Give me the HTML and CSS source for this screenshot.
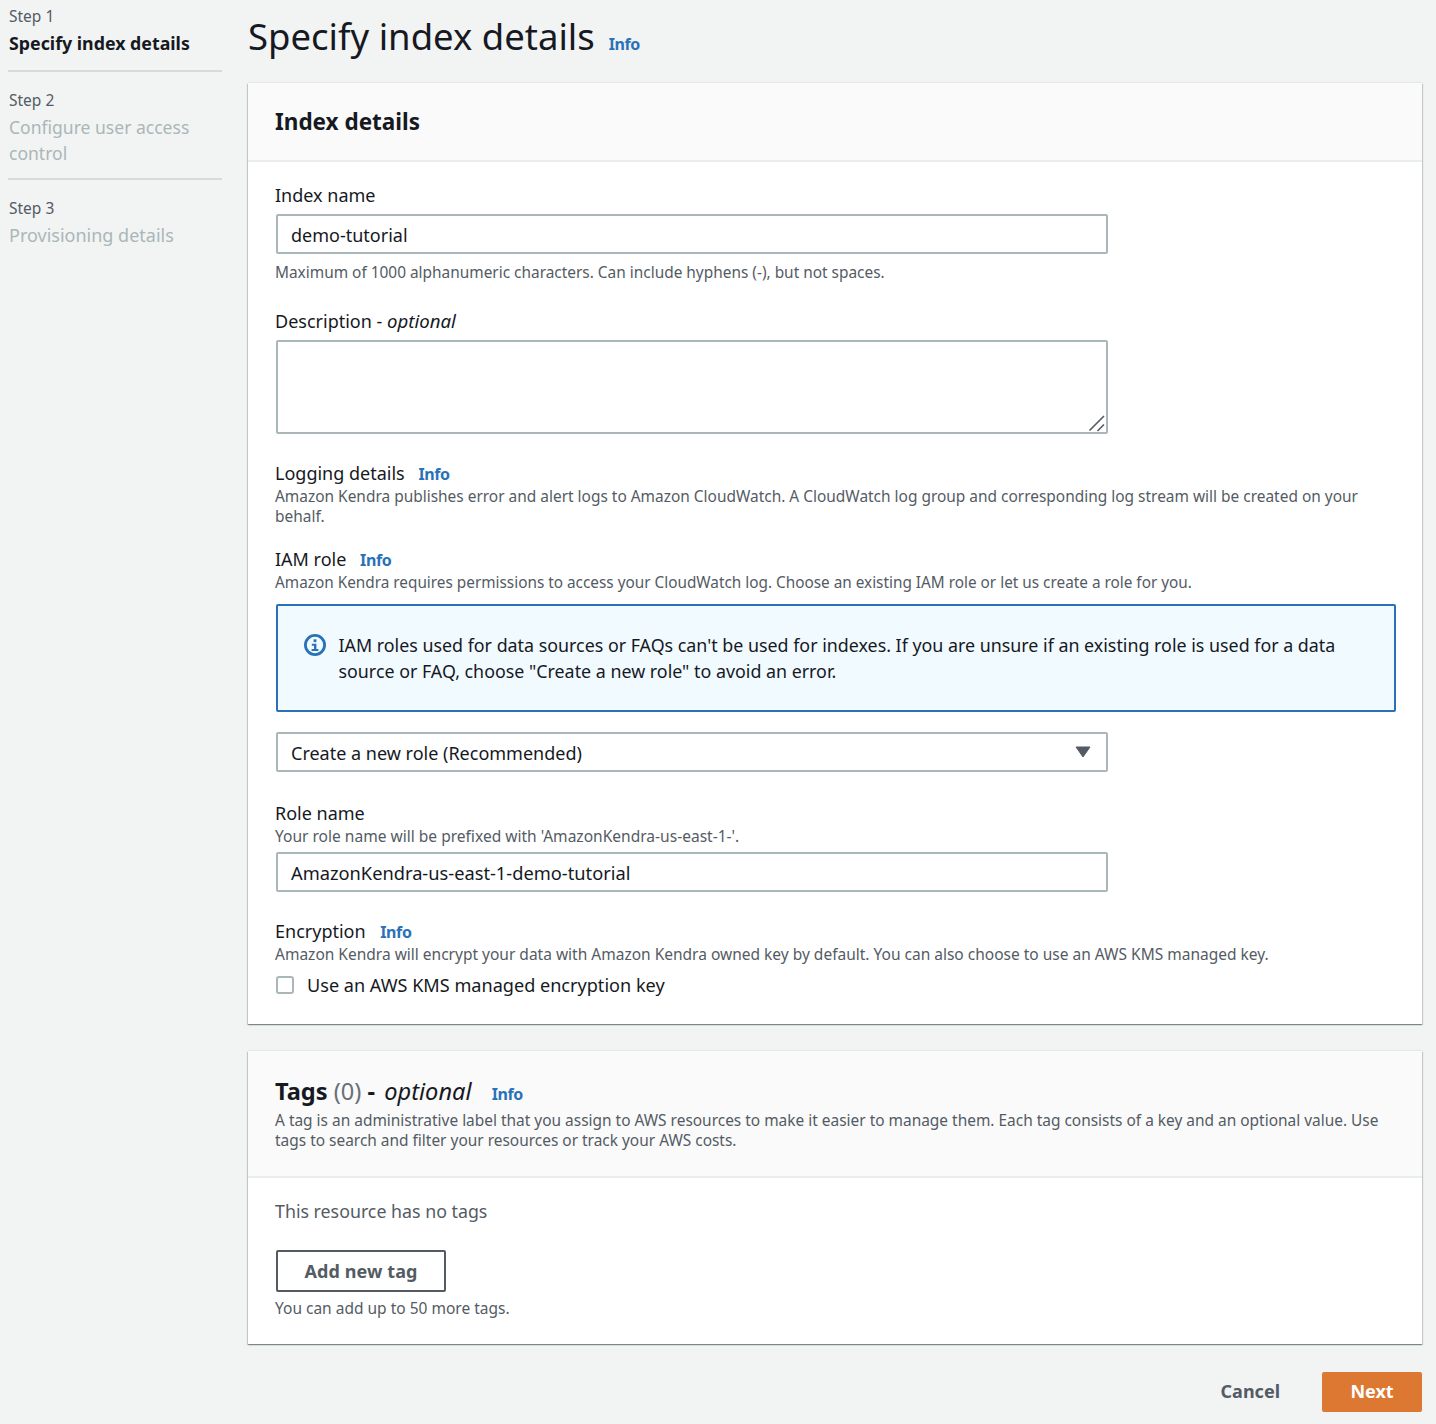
FILE: index.html
```html
<!DOCTYPE html>
<html lang="en">
<head>
<meta charset="utf-8">
<title>Specify index details</title>
<link rel="stylesheet" href="styles.css">
</head>
<body>
<div class="page">
  <nav class="steps">
    <div class="step first">
      <div class="step-num">Step 1</div>
      <div class="step-name current">Specify index details</div>
    </div>
    <div class="step">
      <div class="step-num">Step 2</div>
      <div class="step-name step-wrap">Configure user access control</div>
    </div>
    <div class="step last">
      <div class="step-num">Step 3</div>
      <div class="step-name">Provisioning details</div>
    </div>
  </nav>
  <main class="main">
    <header class="page-head">
      <h1>Specify index details</h1>
      <a class="info info-head">Info</a>
    </header>

    <section class="card card-details">
      <div class="card-head details-head"><h2>Index details</h2></div>
      <div class="card-body">
        <div class="label lbl-name">Index name</div>
        <div class="input input-name">demo-tutorial</div>
        <div class="hint hint-name">Maximum of 1000 alphanumeric characters. Can include hyphens (-), but not spaces.</div>

        <div class="label lbl-desc">Description - <em>optional</em></div>
        <div class="textarea">
          <svg class="grip" width="16" height="16" viewBox="0 0 16 16"><path d="M-.5 14.500 14 0M7.500 15 14 8.500" stroke="#545b64" stroke-width="1.600" fill="none"/></svg>
        </div>

        <div class="label lbl-log">Logging details <a class="info">Info</a></div>
        <div class="hint hint-long">Amazon Kendra publishes error and alert logs to Amazon CloudWatch. A CloudWatch log group and corresponding log stream will be created on your behalf.</div>

        <div class="label lbl-iam">IAM role <a class="info">Info</a></div>
        <div class="hint hint-iam">Amazon Kendra requires permissions to access your CloudWatch log. Choose an existing IAM role or let us create a role for you.</div>

        <div class="alert">
          <svg class="alert-icon" width="24" height="24" viewBox="0 0 24 24"><circle cx="12" cy="12" r="9.600" fill="none" stroke="#2a72b8" stroke-width="2.800"/><rect x="10.600" y="6.300" width="2.800" height="2.800" fill="#2a72b8"/><path d="M8.800 10.700h4.600v5.300h2v2H8.600v-2h2.400v-3.300H8.800z" fill="#2a72b8"/></svg>
          <p>IAM roles used for data sources or FAQs can't be used for indexes. If you are unsure if an existing role is used for a data source or FAQ, choose "Create a new role" to avoid an error.</p>
        </div>

        <div class="input select">
          <span>Create a new role (Recommended)</span>
          <svg class="caret" width="16" height="12" viewBox="0 0 16 12"><path d="M1 1h14L8 11z" fill="#545b64" stroke="#545b64" stroke-linejoin="round"/></svg>
        </div>

        <div class="label lbl-role">Role name</div>
        <div class="hint hint-role">Your role name will be prefixed with 'AmazonKendra-us-east-1-'.</div>
        <div class="input input-role">AmazonKendra-us-east-1-demo-tutorial</div>

        <div class="label lbl-enc">Encryption <a class="info">Info</a></div>
        <div class="hint hint-enc">Amazon Kendra will encrypt your data with Amazon Kendra owned key by default. You can also choose to use an AWS KMS managed key.</div>
        <div class="check-row"><span class="checkbox"></span><span>Use an AWS KMS managed encryption key</span></div>
      </div>
    </section>

    <section class="card card-tags">
      <div class="card-head tags-head">
        <h2 class="tags-title">Tags <span class="count">(0)</span> - <em>optional</em> <a class="info">Info</a></h2>
        <div class="hint hint-long">A tag is an administrative label that you assign to AWS resources to make it easier to manage them. Each tag consists of a key and an optional value. Use tags to search and filter your resources or track your AWS costs.</div>
      </div>
      <div class="card-body tags-body">
        <div class="empty">This resource has no tags</div>
        <button class="btn btn-add">Add new tag</button>
        <div class="hint hint-add">You can add up to 50 more tags.</div>
      </div>
    </section>

    <footer class="actions">
      <button class="btn-link">Cancel</button>
      <button class="btn-next">Next</button>
    </footer>
  </main>
</div>
</body>
</html>
```
FILE: styles.css
```css
* { box-sizing: border-box; }
html, body { margin: 0; height: 100%; }
body {
  background: #f2f3f3;
  color: #16191f;
  font-family: "Noto Sans", "Open Sans", sans-serif;
  font-size: 18px;
  line-height: 26px;
  overflow: hidden;
}
.page {
  display: grid;
  grid-template-columns: 214px 1174px;
  column-gap: 26px;
  padding-left: 8px;
  height: 1424px;
}
.steps { padding-top: 6px; }
.step { border-bottom: 2px solid #d5dbdb; padding: 0 0 14px 1px; margin-bottom: 18px; }
.step:nth-child(2) { padding-bottom: 12px; }
.step.last { border-bottom: 0; }
.step-num { font-size: 15.500px; line-height: 20px; color: #545b64; margin-bottom: 4px; }
.step-name { font-size: 18px; line-height: 26px; color: #aab7b8; }
.step-wrap { font-size: 17.550px; }
.step-name.current { color: #16191f; font-weight: 700; font-size: 17.800px; }
.page-head { display: flex; align-items: baseline; gap: 14px; height: 83px; padding-top: 10px; }
h1 { margin: 0; font-size: 36.500px; line-height: 52px; font-weight: 400; }
.info { color: #2a72b8; font-size: 16px; letter-spacing: -.4px; font-weight: 700; margin-left: 9px; }
.info-head { margin-left: 0; }
.card {
  background: #fff;
  box-shadow: 0 1px 1px 0 rgba(0,28,36,.3), 1px 1px 1px 0 rgba(0,28,36,.15), -1px 1px 1px 0 rgba(0,28,36,.15), 0 -1px 1px 0 rgba(0,28,36,.05);
}
.card-head {
  background: #fafafa;
  border-bottom: 2px solid #eaeded;
  padding: 0 27px;
}
.details-head { height: 79px; display: flex; align-items: center; }
h2 { margin: 0; font-size: 22.500px; line-height: 30px; font-weight: 700; }
.card-body { padding: 0 27px; }
.card-details { height: 941px; }
.card-details .card-body { padding-top: 20px; }
.label { font-size: 18px; line-height: 26px; }
.hint { font-size: 15.420px; line-height: 20px; color: #545b64; }
.hint-long { font-size: 15.450px; }
.input, .textarea {
  display: block;
  width: 832px;
  margin-left: 1px;
  background: #fff;
  border: 2px solid #aab7b8;
  border-radius: 2px;
}
.input { height: 40px; padding: 0 13px; line-height: 38px; font-size: 18px; }
.input-name { margin-top: 6px; }
.hint-name { margin-top: 9px; }
.lbl-desc { margin-top: 25px; }
.lbl-desc em { font-size: 18.600px; }
.textarea { height: 94px; margin-top: 6px; position: relative; }
.grip { position: absolute; right: 0; bottom: 0; overflow: visible; }
.lbl-log { margin-top: 26px; height: 26px; }
.lbl-iam { margin-top: 20px; height: 26px; }
.hint-iam { font-size: 15.330px; }
.alert {
  display: flex;
  margin-top: 12px;
  height: 108px;
  background: #f1faff;
  border: 2px solid #2a72b8;
  border-radius: 2px;
  padding: 26px 40px 0 26px;
  margin-left: 1px;
  width: 1120px;
  gap: 11.500px;
}
.alert-icon { flex: none; margin-top: 1px; margin-left: -1px; }
.alert p { margin: 0; font-size: 17.850px; line-height: 26px; }
.select { display: flex; justify-content: space-between; align-items: center; margin-top: 20px; height: 40px; padding-right: 15px; }
.select span { padding-top: 2px; }
.lbl-role { margin-top: 28px; }
.hint-role { font-size: 15.550px; }
.input-role { margin-top: 6px; font-size: 18.250px; }
.lbl-enc { margin-top: 26px; height: 26px; }
.lbl-enc .info { margin-left: 10px; }
.hint-enc { font-size: 15.500px; }
.check-row { display: flex; align-items: center; gap: 13px; margin-top: 8px; margin-left: 1px; font-size: 18.100px; }
.checkbox { width: 18px; height: 18px; border: 2px solid #aab7b8; border-radius: 3px; background: #fff; }
.card-tags { margin-top: 27px; height: 293px; }
.tags-head { height: 127px; padding-top: 25px; }
.tags-title { font-size: 23.600px; line-height: 30px; margin-bottom: 1px; }
.tags-title em { font-weight: 400; margin-left: 3px; }
.tags-title .info { margin-left: 14px; }
.count { color: #687078; font-weight: 400; }
.tags-body { padding-top: 20px; }
.empty { color: #545b64; font-size: 17.800px; line-height: 26px; }
.btn {
  display: block;
  margin-top: 26px;
  margin-left: 1px;
  width: 170px;
  height: 42px;
  border: 2px solid #545b64;
  border-radius: 2px;
  background: #fff;
  color: #545b64;
  letter-spacing: .1px;
  font: 700 18px/26px "Noto Sans", sans-serif;
}
.hint-add { margin-top: 6px; font-size: 15.500px; }
.actions { display: flex; justify-content: flex-end; align-items: center; gap: 42px; margin-top: 28px; }
.btn-link { border: 0; background: none; color: #545b64; font: 700 18px/26px "Noto Sans", sans-serif; padding: 0 0 2px; }
.btn-next { width: 100px; height: 40px; border: 0; padding: 0 0 2px; border-radius: 2px; background: #dd7832; color: #fff; font: 700 18px/26px "Noto Sans", sans-serif; }
```
